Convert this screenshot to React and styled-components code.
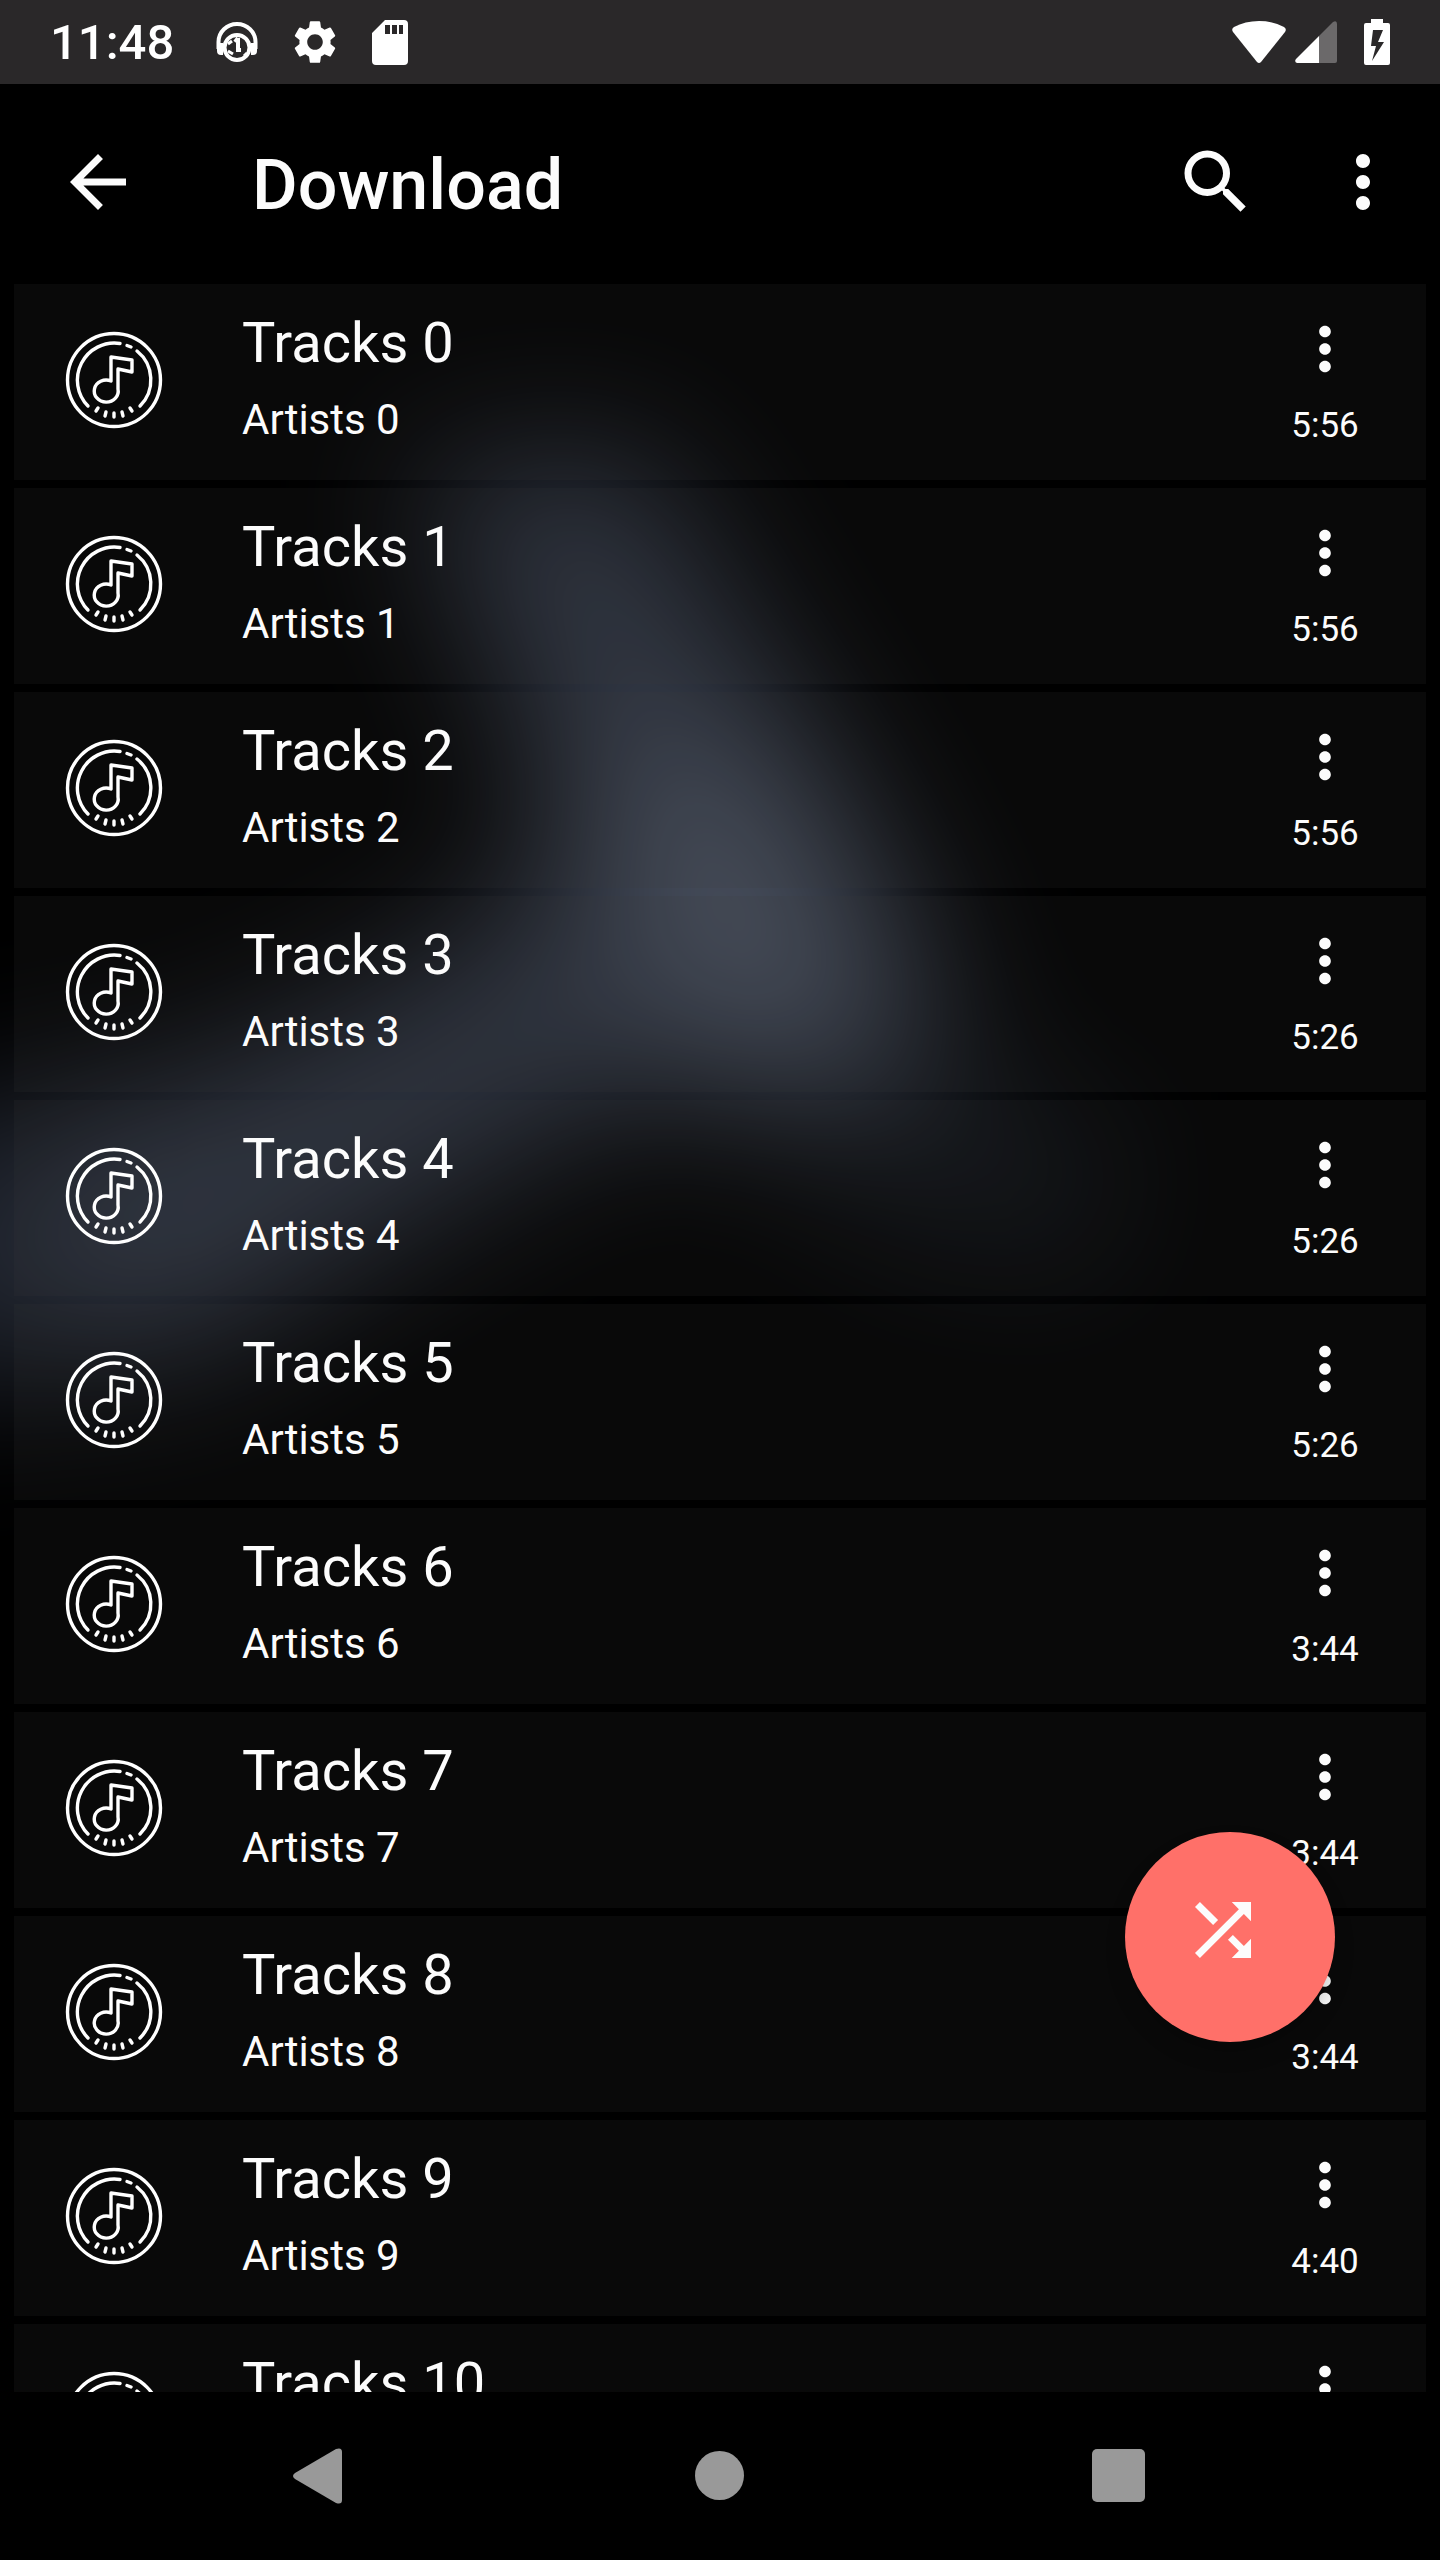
import React from 'react';
import styled, { createGlobalStyle } from 'styled-components';
import { MdArrowBack, MdMoreVert, MdSearch, MdSettings, MdShuffle } from 'react-icons/md';

const GlobalStyle = createGlobalStyle`
  *, *::before, *::after { box-sizing: border-box; }
  body {
    margin: 0;
    background: #000;
    color: #fcfcfc;
    font-family: Roboto, "Noto Sans", sans-serif;
  }
  button { font: inherit; color: inherit; }
  svg { display: block; flex: none; }
`;

const Screen = styled.div`
  position: relative;
  isolation: isolate;
  display: flex;
  flex-direction: column;
  height: 100vh;
  overflow: hidden;
  background: #000;
`;

const Backdrop = styled.svg`
  position: absolute;
  inset: 0;
  z-index: -1;
  width: 100%;
  height: 100%;
`;

const StatusBar = styled.div`
  flex: none;
  display: flex;
  align-items: center;
  justify-content: space-between;
  height: 84px;
  padding: 0 50px;
  background: #2a2829;
  color: #fff;
`;

const StatusGroup = styled.div`
  display: flex;
  align-items: center;
  gap: ${({ $gap }) => $gap}px;
`;

const Clock = styled.time`
  padding-top: 2px;
  font-size: 49px;
  font-weight: 500;
  line-height: 84px;
`;

const Toolbar = styled.header`
  flex: none;
  display: flex;
  align-items: center;
  height: 196px;
  padding: 0 35px;
`;

const ToolbarActions = styled.div`
  display: flex;
  gap: 63px;
`;

const IconButton = styled.button`
  flex: none;
  display: flex;
  align-items: center;
  justify-content: center;
  width: ${({ $width }) => $width}px;
  height: ${({ $height }) => $height}px;
  padding: 0;
  border: 0;
  background: none;
`;

const Title = styled.h1`
  flex: 1;
  margin: 0;
  padding: 6px 0 0 91px;
  font-size: 70px;
  font-weight: 500;
  line-height: 84px;
`;

const TrackList = styled.ul`
  flex: 1;
  min-height: 0;
  overflow: hidden;
  display: flex;
  flex-direction: column;
  gap: 8px;
  margin: 0;
  padding: 4px 14px 0;
  list-style: none;
`;

const TrackRow = styled.li`
  flex: none;
  display: flex;
  height: 196px;
  padding: 0 49px 0 50px;
  background: rgba(60, 60, 60, 0.15);
`;

const Cover = styled.div`
  display: flex;
  align-items: center;
  width: 178px;
  padding-bottom: 4px;
`;

const TrackText = styled.div`
  flex: 1;
  min-width: 0;
  padding-top: 26px;
`;

const TrackName = styled.div`
  font-size: 56px;
  line-height: 66px;
`;

const ArtistName = styled.div`
  padding-top: 19px;
  font-size: 42px;
  line-height: 50px;
`;

const TrackSide = styled.div`
  display: flex;
  flex-direction: column;
  align-items: center;
  width: 104px;
  padding-top: 30px;
`;

const Duration = styled.div`
  padding-top: 21px;
  font-size: 35px;
  line-height: 42px;
`;

const ShuffleButton = styled.button`
  position: absolute;
  right: 105px;
  bottom: 518px;
  display: flex;
  align-items: center;
  justify-content: center;
  width: 210px;
  height: 210px;
  padding: 0 14px 14px 0;
  border: 0;
  border-radius: 50%;
  background: #ff7069;
  box-shadow: 0 12px 20px rgba(0, 0, 0, 0.2);
`;

const NavBar = styled.nav`
  flex: none;
  display: flex;
  height: 168px;
  padding: 0 120px;
  background: #000;
`;

const NavButton = styled.button`
  flex: 1;
  display: flex;
  align-items: center;
  justify-content: center;
  padding: 0;
  border: 0;
  background: none;
`;

const durations = ['5:56', '5:56', '5:56', '5:26', '5:26', '5:26', '3:44', '3:44', '3:44', '4:40', '4:40'];
const tracks = durations.map((duration, i) => ({ name: `Tracks ${i}`, artist: `Artists ${i}`, duration }));

function GlowBackdrop() {
  return (
    <Backdrop viewBox="0 0 1440 2560" preserveAspectRatio="xMidYMid slice" aria-hidden="true">
      <defs>
        <filter id="soft" filterUnits="userSpaceOnUse" x="-500" y="0" width="2400" height="2000" colorInterpolationFilters="sRGB">
          <feGaussianBlur stdDeviation="75" />
        </filter>
      </defs>
      <g filter="url(#soft)">
        <path d="M410 470L640 450L780 680L910 900L980 1130L820 1130L640 1090L440 1200L200 1350L-300 1400V1140L180 1080L400 980L560 860L520 720Z" fill="#2e3441" />
        <path d="M-300 1130L60 1110L20 1390H-300Z" fill="#1c2029" />
        <path d="M900 1040L1120 1120L1100 1280L820 1220Z" fill="#0f1217" />
        <path d="M590 740L790 760L900 1060L660 1040Z" fill="#474e5c" />
      </g>
    </Backdrop>
  );
}

function PlayerIcon() {
  return (
    <svg width="42" height="42" viewBox="0 0 42 42" fill="none" stroke="#fff">
      <path d="M2.500 28V21a18.500 18 0 0 1 37 0v7" strokeWidth="4" />
      <path d="M1 22h6v12H5q-4 0-4-4zM41 22h-6v12h2q4 0 4-4z" fill="#fff" stroke="none" />
      <circle cx="21" cy="26.500" r="12.500" strokeWidth="4" />
      <path d="M22 17v11M19 21l3-4M20 29h5" strokeWidth="4" />
      <path d="M12 23l4-3M12 30l5 3M28 35l3-3" strokeWidth="3" />
    </svg>
  );
}

function SdCardIcon() {
  return (
    <svg width="36" height="45" viewBox="0 0 36 45">
      <path fillRule="evenodd" fill="#fff" d="M13 0H32q4 0 4 4V41q0 4-4 4H4q-4 0-4-4V13zM13 5v9h5V5zM20 5v9h5V5zM27 5v9h4V5z" />
    </svg>
  );
}

function WifiIcon() {
  return (
    <svg width="54" height="44" viewBox="0 0 54 44" fill="#fff">
      <path d="M1 12Q-1 9 2 7Q13 1 27 1T52 7Q55 9 53 12L29 42Q27 44 25 42Z" />
    </svg>
  );
}

function SignalIcon() {
  return (
    <svg width="42" height="42" viewBox="0 0 42 42">
      <path d="M24 15L38 1q4-2 4 2v37q0 2-2 2H24z" fill="#6b696a" />
      <path d="M24 15V42H2q-3-1-1-4z" fill="#fff" />
    </svg>
  );
}

function BatteryIcon() {
  return (
    <svg width="26" height="46" viewBox="0 0 26 46">
      <path fillRule="evenodd" fill="#fff" d="M7 0h12v4h5q2 0 2 2v38q0 2-2 2H2q-2 0-2-2V6q0-2 2-2h5zM9 11L7 27h5L8 42L20 23h-6l5-12z" />
    </svg>
  );
}

function DiscIcon() {
  return (
    <svg width="100" height="98" viewBox="0 0 100 98" fill="none" stroke="#fff" strokeWidth="3.4" strokeLinecap="round" strokeLinejoin="round">
      <circle cx="50" cy="49" r="46.5" />
      <path d="M24 75A37 37 0 0 1 56 12.500M73 20A37 37 0 0 1 76 75M63 14.500L67 16" />
      <path d="M34 77l-2 3M42 81l-1 4M50 82v4M58 81l1 4M66 77l2 3" />
      <path d="M47 50V26L68 29V41L54 38V58A12 11 0 1 1 47 50Z" />
    </svg>
  );
}

export default function App() {
  return (
    <>
      <GlobalStyle />
      <Screen>
        <GlowBackdrop />
        <StatusBar>
          <StatusGroup $gap={42}>
            <Clock>11:48</Clock>
            <StatusGroup $gap={31}>
              <PlayerIcon />
              <MdSettings size={52} />
              <SdCardIcon />
            </StatusGroup>
          </StatusGroup>
          <StatusGroup $gap={27}>
            <StatusGroup $gap={9}>
              <WifiIcon />
              <SignalIcon />
            </StatusGroup>
            <BatteryIcon />
          </StatusGroup>
        </StatusBar>
        <Toolbar>
          <IconButton type="button" aria-label="Back" $width={126} $height={168}>
            <MdArrowBack size={84} />
          </IconButton>
          <Title>Download</Title>
          <ToolbarActions>
            <IconButton type="button" aria-label="Search" $width={84} $height={168}>
              <MdSearch size={84} />
            </IconButton>
            <IconButton type="button" aria-label="More options" $width={84} $height={168}>
              <MdMoreVert size={84} />
            </IconButton>
          </ToolbarActions>
        </Toolbar>
        <TrackList>
          {tracks.map((track) => (
            <TrackRow key={track.name}>
              <Cover>
                <DiscIcon />
              </Cover>
              <TrackText>
                <TrackName>{track.name}</TrackName>
                <ArtistName>{track.artist}</ArtistName>
              </TrackText>
              <TrackSide>
                <IconButton type="button" aria-label={`Options for ${track.name}`} $width={70} $height={70}>
                  <MdMoreVert size={70} />
                </IconButton>
                <Duration>{track.duration}</Duration>
              </TrackSide>
            </TrackRow>
          ))}
        </TrackList>
        <ShuffleButton type="button" aria-label="Shuffle">
          <MdShuffle size={84} />
        </ShuffleButton>
        <NavBar aria-label="System">
          <NavButton type="button" aria-label="Back">
            <svg width="54" height="56" viewBox="0 0 54 56" fill="#999">
              <path d="M2 25L43 1Q49-1 49 4V52Q49 57 43 55L2 31Q-2 28 2 25Z" />
            </svg>
          </NavButton>
          <NavButton type="button" aria-label="Home">
            <svg width="50" height="50" viewBox="0 0 50 50" fill="#999">
              <circle cx="24.500" cy="24.500" r="24.500" />
            </svg>
          </NavButton>
          <NavButton type="button" aria-label="Recent apps">
            <svg width="56" height="54" viewBox="0 0 56 54" fill="#999">
              <rect width="53" height="53" rx="5" />
            </svg>
          </NavButton>
        </NavBar>
      </Screen>
    </>
  );
}
